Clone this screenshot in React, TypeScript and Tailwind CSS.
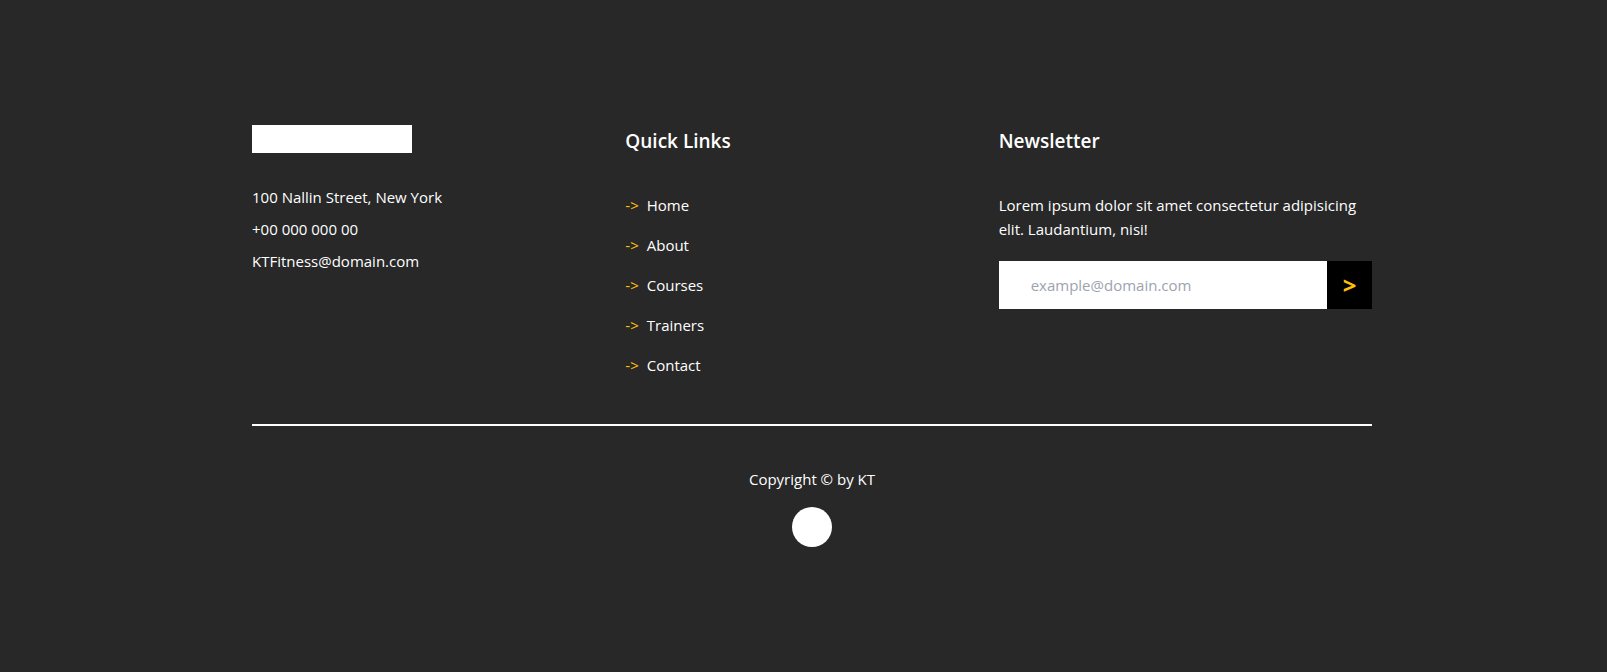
import React from 'react';

const links = ['Home', 'About', 'Courses', 'Trainers', 'Contact'];

const Footer = () => {
  return (
    <div className="min-h-screen bg-[#282828] text-white font-['Open_Sans',sans-serif]">
      <div className="flex justify-center pl-[17px] pt-[125px]">
        <div className="w-[1120px]">
          <div className="grid grid-cols-3">
            {/* brand + contact */}
            <div>
              <div className="w-[160px] h-[28px] bg-white"></div>
              <div className="mt-[28px] text-[15px] leading-[32px]">
                <p>100 Nallin Street, New York</p>
                <p>+00 000 000 00</p>
                <p>KTFitness@domain.com</p>
              </div>
            </div>

            {/* quick links */}
            <div className="pt-[2px]">
              <h3 className="text-[19px] leading-[28px] font-semibold">Quick Links</h3>
              <ul className="mt-[38px] text-[15px] leading-[24px]">
                {links.map((link) => (
                  <li key={link} className="mb-[16px] last:mb-0">
                    <a href="#" className="flex gap-[8px]">
                      <span className="text-[#ffc107]">-&gt;</span>
                      <span>{link}</span>
                    </a>
                  </li>
                ))}
              </ul>
            </div>

            {/* newsletter */}
            <div className="pt-[2px]">
              <h3 className="text-[19px] leading-[28px] font-semibold">Newsletter</h3>
              <p className="mt-[38px] text-[15px] leading-[24px] pr-[10px]">
                Lorem ipsum dolor sit amet consectetur adipisicing elit. Laudantium, nisi!
              </p>
              <form className="mt-[20px] flex h-[48px]" onSubmit={(e) => e.preventDefault()}>
                <input
                  type="email"
                  placeholder="example@domain.com"
                  className="flex-1 min-w-0 bg-white pl-[32px] text-[15px] text-black placeholder:text-[#9ca3af] outline-none"
                />
                <button type="submit" className="w-[45px] bg-black text-[#ffc107] text-[24px] font-bold">
                  &gt;
                </button>
              </form>
            </div>
          </div>

          <div className="mt-[47px] h-[2px] bg-white"></div>

          <div className="flex flex-col items-center pt-[41px]">
            <p className="text-[15px] leading-[24px]">Copyright © by KT</p>
            <div className="mt-[16px] w-[40px] h-[40px] rounded-full bg-white"></div>
          </div>
        </div>
      </div>
    </div>
  );
};

export default function App() {
  return <Footer />;
}
